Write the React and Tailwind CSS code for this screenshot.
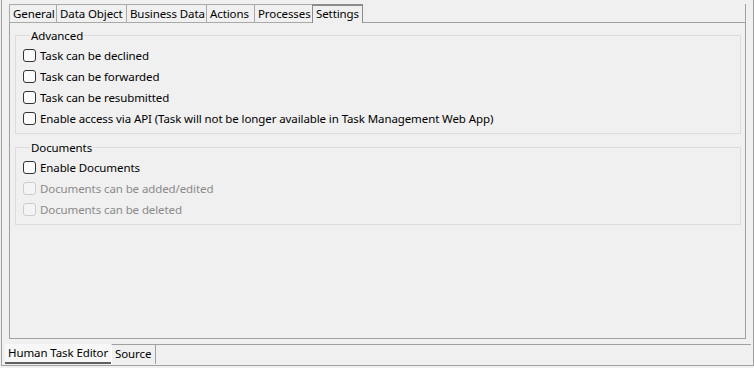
import React from "react";

const topTabs = [
  { label: "General", w: "w-[48px]" },
  { label: "Data Object", w: "w-[70px]" },
  { label: "Business Data", w: "w-[80px]" },
  { label: "Actions", w: "w-[48px]" },
  { label: "Processes", w: "w-[58px]" },
];

const Check = ({ label, disabled = false }) => (
  <label className="flex items-center gap-[4px] h-[21px]">
    <span
      className={
        disabled
          ? "w-[13px] h-[13px] rounded-[3px] border border-[#cccccc] bg-[#f4f4f4]"
          : "w-[13px] h-[13px] rounded-[3px] border border-[#333333] bg-[#fbfbfb]"
      }
    />
    <span className={disabled ? "text-[#8a8a8a]" : "text-black"}>{label}</span>
  </label>
);

const Group = ({ title, children, className = "" }) => (
  <fieldset className={"border border-[#dcdcdc] ml-[5px] mr-[4px] pl-[7px] pb-[4px] " + className}>
    <legend className="ml-[7px] px-[1px] leading-[15px] text-black">{title}</legend>
    <div className="mt-[2px]">{children}</div>
  </fieldset>
);

export default function App() {
  return (
    <div
      className="w-[754px] h-[368px] bg-[#f0f0f0] overflow-hidden text-[11.5px] tracking-[-0.1px]"
      style={{ fontFamily: "'Noto Sans', 'Open Sans', sans-serif" }}
    >
      <div className="ml-px w-[753px] h-[366px] border-l border-r border-b border-[#a0a0a0] flex flex-col">
        {/* tab folder */}
        <div className="ml-[7px] mr-[7px] mt-[4px] flex flex-col h-[335px]">
          <div className="flex h-[19px]">
            {topTabs.map((t, i) => (
              <div
                key={t.label}
                className={
                  t.w +
                  " h-[19px] border-t border-b border-r border-[#a9a9a9] pl-[3px] leading-[17px] whitespace-nowrap " +
                  (i === 0 ? "border-l" : "")
                }
              >
                {t.label}
              </div>
            ))}
            <div className="w-[51px] h-[19px] border-t-2 border-r border-[#8c8c8c] pl-[3px] leading-[16px] -ml-px border-l">
              Settings
            </div>
            <div className="flex-1 h-[19px] border-b border-r border-[#a0a0a0]" />
          </div>
          <div className="flex-1 border-l border-r border-b border-[#a0a0a0] pt-[5px]">
            <Group title="Advanced">
              <Check label="Task can be declined" />
              <Check label="Task can be forwarded" />
              <Check label="Task can be resubmitted" />
              <Check label="Enable access via API (Task will not be longer available in Task Management Web App)" />
            </Group>
            <Group title="Documents" className="mt-[6px]">
              <Check label="Enable Documents" />
              <Check label="Documents can be added/edited" disabled />
              <Check label="Documents can be deleted" disabled />
            </Group>
          </div>
        </div>
        {/* bottom tabs */}
        <div className="flex ml-[3px] mr-[2px] mt-[5px] h-[20px]">
          <div className="w-[106px] h-[20px] border-b-2 border-[#606060] pl-[3px] leading-[18px] bg-[#f7f7f7] whitespace-nowrap">
            Human Task Editor
          </div>
          <div className="w-[45px] h-[20px] border-t border-r border-[#a0a0a0] border-l border-l-white pl-[3px] leading-[18px]">
            Source
          </div>
          <div className="flex-1 border-t border-[#a0a0a0]" />
        </div>
      </div>
    </div>
  );
}
